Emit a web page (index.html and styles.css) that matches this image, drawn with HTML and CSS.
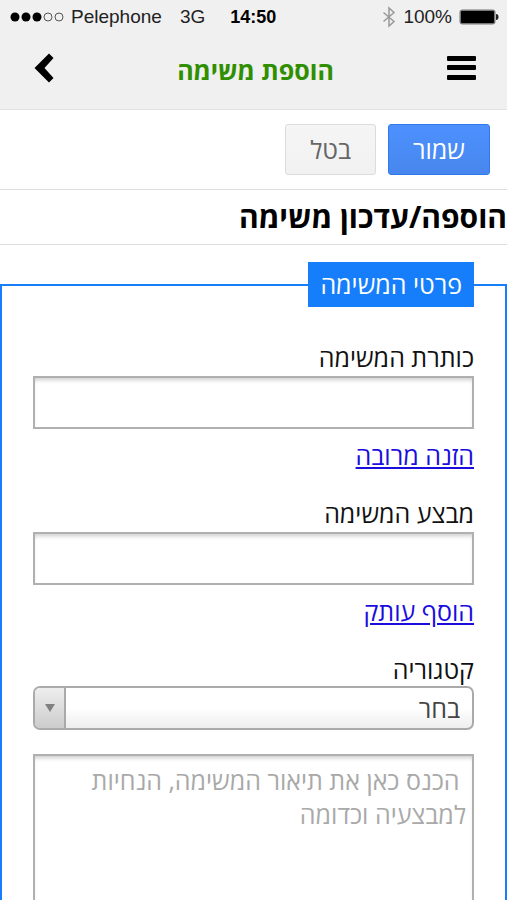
FILE: index.html
```html
<!DOCTYPE html>
<html lang="he" dir="rtl">
<head>
<meta charset="utf-8">
<meta name="viewport" content="width=device-width, initial-scale=1">
<title>הוספת משימה</title>
<link rel="stylesheet" href="styles.css">
</head>
<body>
<div class="top">
  <div class="status" dir="ltr">
    <svg class="signal" width="54" height="12" viewBox="0 0 54 12">
      <circle cx="5" cy="6" r="4.5"/>
      <circle cx="16" cy="6" r="4.5"/>
      <circle cx="27" cy="6" r="4.5"/>
      <circle class="empty" cx="38" cy="6" r="4"/>
      <circle class="empty" cx="49" cy="6" r="4"/>
    </svg>
    <span class="carrier">Pelephone</span>
    <span class="network">3G</span>
    <span class="time">14:50</span>
    <div class="status-right">
      <svg class="bluetooth" width="14" height="22" viewBox="0 0 14 22">
        <path d="M1.500 6.500 L12 15.500 L7 20 V2 L12 6.500 L1.500 15.500"/>
      </svg>
      <span>100%</span>
      <svg width="40" height="16" viewBox="0 0 40 16">
        <rect x="0.500" y="0.500" width="36" height="15" rx="3" fill="#777"/>
        <rect x="2" y="2" width="33" height="12" rx="1" fill="#000"/>
        <path d="M37 5 Q39.500 5 39.500 8 Q39.500 11 37 11 Z" fill="#222"/>
      </svg>
    </div>
  </div>
  <div class="header">
    <button type="button" class="icon-btn" aria-label="תפריט">
      <svg width="30" height="26" viewBox="0 0 30 26">
        <rect x="0" y="1" width="29" height="5" rx="1"/>
        <rect x="0" y="10" width="29" height="5" rx="1"/>
        <rect x="0" y="20" width="29" height="5" rx="1"/>
      </svg>
    </button>
    <h1 class="heading">הוספת משימה</h1>
    <button type="button" class="icon-btn back" aria-label="חזרה">
      <svg width="20" height="30" viewBox="0 0 20 30">
        <path d="M15 0.500 L19.500 5 L10.500 15 L19.500 25 L15 29.500 L0.500 15 Z"/>
      </svg>
    </button>
  </div>
</div>

<form class="task">
  <div class="actions">
    <button type="button" class="btn save">שמור</button>
    <button type="button" class="btn cancel">בטל</button>
  </div>
  <h2 class="title">הוספה/עדכון משימה</h2>

  <fieldset class="details">
    <legend>פרטי המשימה</legend>
    <div class="field">
      <label for="task_name">כותרת המשימה</label>
      <input type="text" id="task_name" name="task_name">
      <a href="#">הזנה מרובה</a>
    </div>
    <div class="field">
      <label for="performer">מבצע המשימה</label>
      <input type="text" id="performer" name="performer">
      <a href="#">הוסף עותק</a>
    </div>
    <div class="field">
      <label for="category">קטגוריה</label>
      <div class="select">
        <select id="category" name="category">
          <option>בחר</option>
        </select>
        <span class="arrow"></span>
      </div>
    </div>
    <textarea name="description" rows="6" aria-label="תיאור המשימה" placeholder=" הכנס כאן את תיאור המשימה, הנחיות למבצעיה וכדומה"></textarea>
  </fieldset>
</form>
</body>
</html>
```

FILE: styles.css
```css
* {
  box-sizing: border-box;
}

body {
  margin: 0;
  background: #fff;
  color: #111;
  font-family: "Open Sans", "Noto Sans", sans-serif;
  font-size: 25px;
  line-height: 34px;
}

input, select, textarea, button {
  font: inherit;
}

/* the form scrolls under the top bar */
body {
  display: flex;
  flex-direction: column;
  height: 100vh;
  overflow: hidden;
}

.task {
  flex: 1;
  min-height: 0;
  overflow-y: auto;
  scrollbar-width: none;
}

/* top bar */
.top {
  background: #f0f0f0;
  border-bottom: 1px solid #e2e2e2;
}

.status {
  display: flex;
  align-items: center;
  height: 34px;
  padding: 0 8px 0 10px;
  font-family: "Liberation Sans", Arial, sans-serif;
  font-size: 19px;
  color: #222;
}

.signal .empty {
  fill: none;
  stroke: #555;
}

.carrier {
  margin-left: 7px;
}

.network {
  margin-left: 18px;
}

.time {
  margin-left: 25px;
  font-weight: bold;
  font-size: 18px;
  color: #000;
}

.status-right {
  display: flex;
  align-items: center;
  gap: 7px;
  margin-left: auto;
}

.bluetooth path {
  fill: none;
  stroke: #999;
  stroke-width: 1.5;
}

.header {
  display: flex;
  align-items: center;
  justify-content: space-between;
  height: 75px;
  padding: 0 30px 8px 34px;
}

.icon-btn {
  display: flex;
  width: 30px;
  padding: 0;
  border: 0;
  background: none;
}

.back {
  justify-content: flex-end;
}

.heading {
  margin: 0;
  padding-top: 4px;
  font-size: 25px;
  color: #2f8f00;
}

/* buttons */
.actions {
  display: flex;
  gap: 12px;
  padding: 14px 17px;
  border-bottom: 1px solid #ddd;
}

.btn {
  height: 51px;
  padding: 0 24px 2px;
  border-radius: 3px;
}

.save {
  border: 1px solid #3079ed;
  background: linear-gradient(#4d90fe, #4787ed);
  color: #fff;
}

.cancel {
  border: 1px solid #dcdcdc;
  background: linear-gradient(#f5f5f5, #f1f1f1);
  color: #666;
}

.title {
  margin: 0;
  padding: 10px 0;
  border-bottom: 1px solid #ddd;
  font-size: 30px;
  color: #000;
}

/* form */
.details {
  min-width: 0;
  margin: 17px 0 0;
  padding: 33px 31px;
  border: 2px solid #167efb;
}

.details legend {
  padding: 5px 12px 6px;
  background: #167efb;
  color: #fff;
}

.field {
  display: flex;
  flex-direction: column;
  align-items: flex-start;
  margin-bottom: 24px;
}

.field input {
  width: 100%;
  height: 53px;
  margin-top: 2px;
  border: 2px solid #b0b0b0;
  box-shadow: inset 0 4px 4px -2px #ccc;
}

.field a {
  margin-top: 9px;
  color: #1a0dde;
}

.select {
  position: relative;
  width: 100%;
}

.select select {
  display: block;
  width: 100%;
  height: 44px;
  padding: 0 12px;
  border: 2px solid #aaa;
  border-radius: 7px;
  appearance: none;
  background: linear-gradient(#fff 50%, #eee);
  color: #444;
}

.arrow {
  position: absolute;
  left: 2px;
  top: 2px;
  bottom: 2px;
  display: flex;
  align-items: center;
  justify-content: center;
  width: 31px;
  border-right: 2px solid #aaa;
  border-radius: 5px 0 0 5px;
  background: linear-gradient(#eee, #ccc);
  pointer-events: none;
}

.arrow::after {
  content: "";
  border: 5px solid transparent;
  border-top: 8px solid #808080;
  border-bottom: 0;
}

textarea {
  display: block;
  width: 100%;
  padding: 7px 6px;
  border: 2px solid #b0b0b0;
  box-shadow: inset 0 4px 4px -2px #ccc;
  resize: none;
}

textarea::placeholder {
  color: #a9a9a9;
}
```
